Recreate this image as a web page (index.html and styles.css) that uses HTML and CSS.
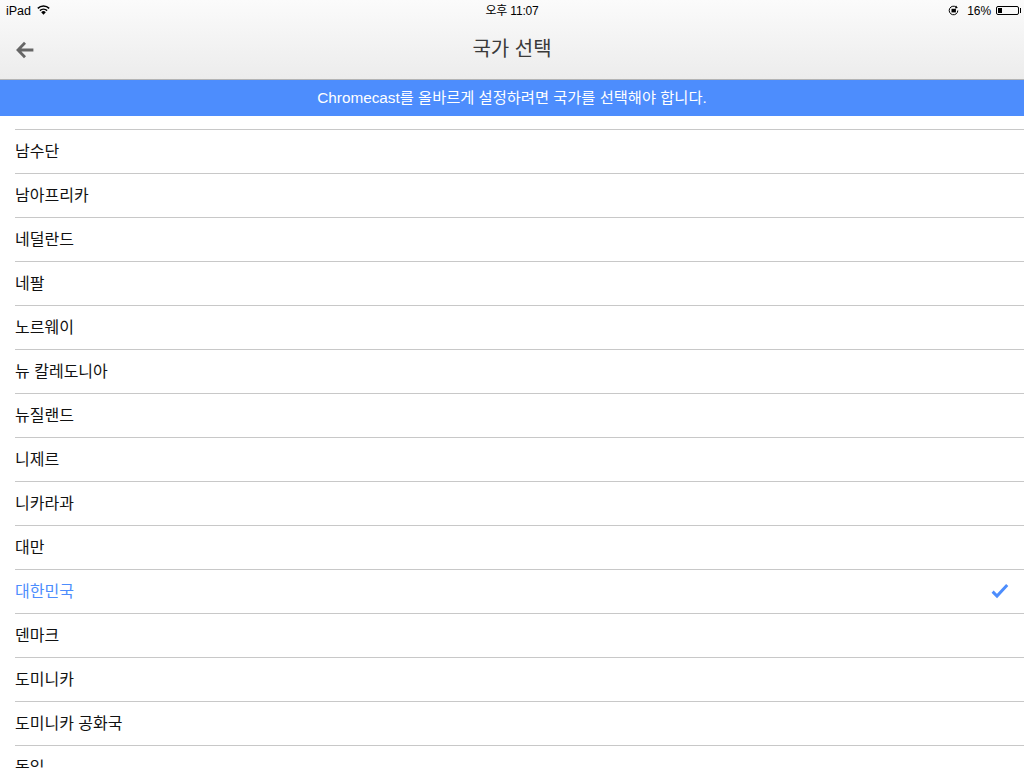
FILE: index.html
```html
<!DOCTYPE html>
<html lang="ko">
<head>
<meta charset="utf-8">
<title>국가 선택</title>
<link rel="stylesheet" href="styles.css">
</head>
<body>
<div class="screen">
  <header class="top">
    <div class="status">
      <div class="status-side">
        <span class="device">iPad</span>
        <svg class="wifi" width="13" height="10" viewBox="0 0 13 10"><path d="M6.5 9.8 4.2 7.2a3.2 3.2 0 0 1 4.6 0z" fill="#000"/><path d="M2.9 5.6A5.2 5.2 0 0 1 10.1 5.6M.8 3.4A8.2 8.2 0 0 1 12.2 3.4" fill="none" stroke="#000" stroke-width="1.5"/></svg>
      </div>
      <div class="status-time">오후 11:07</div>
      <div class="status-side status-right">
        <svg class="lock" width="11" height="11" viewBox="0 0 11 11"><path d="M9.8 5.5A4.3 4.3 0 1 1 8.4 2.3" fill="none" stroke="#000" stroke-width="1"/><path d="M8 .5 9.8 3 7 3.4z" fill="#000"/><rect x="3.5" y="3.8" width="4.4" height="3.6" fill="#000"/></svg>
        <span class="pct">16%</span>
        <div class="battery"><div class="battery-level"></div></div>
      </div>
    </div>
    <div class="nav">
      <svg class="back" width="18" height="18" viewBox="0 0 18 18"><path d="M9 1.8 2 9l7 7.2M2.4 9H17.4" fill="none" stroke="#666" stroke-width="2.8"/></svg>
      <h1 class="title">국가 선택</h1>
    </div>
  </header>
  <div class="notice">Chromecast를 올바르게 설정하려면 국가를 선택해야 합니다.</div>
  <ul class="list">
    <li class="row">남수단</li>
    <li class="row">남아프리카</li>
    <li class="row">네덜란드</li>
    <li class="row">네팔</li>
    <li class="row">노르웨이</li>
    <li class="row">뉴 칼레도니아</li>
    <li class="row">뉴질랜드</li>
    <li class="row">니제르</li>
    <li class="row">니카라과</li>
    <li class="row">대만</li>
    <li class="row selected">대한민국
      <svg class="check" width="18" height="16" viewBox="0 0 18 16"><path d="M1.6 8.6 6 13 16.2 2" fill="none" stroke="#4d8dfd" stroke-width="3"/></svg>
    </li>
    <li class="row">덴마크</li>
    <li class="row">도미니카</li>
    <li class="row">도미니카 공화국</li>
    <li class="row">독일</li>
  </ul>
</div>
</body>
</html>
```
FILE: styles.css
```css
* { box-sizing: border-box; }
html, body { margin: 0; padding: 0; background: #fff; }
.screen {
  width: 1024px;
  height: 768px;
  overflow: hidden;
  font-family: "Noto Sans CJK KR", "Liberation Sans", sans-serif;
  color: #000;
}
.top {
  height: 80px;
  background: linear-gradient(#fbfbfb, #ececec);
  border-bottom: 1px solid #b4b4b4;
}
.status {
  height: 20px;
  padding: 0 6px;
  display: grid;
  grid-template-columns: 1fr auto 1fr;
  align-items: center;
  font-family: "Liberation Sans", "Noto Sans CJK KR", sans-serif;
  font-size: 12px;
}
.status-side { display: flex; align-items: center; gap: 6px; }
.status-right { justify-content: flex-end; gap: 8px; margin-right: -1px; }
.device { font-size: 12.5px; margin-top: 1px; }
.wifi { margin-top: -1px; }
.status-time { font-size: 12px; letter-spacing: -0.2px; margin-bottom: 2px; }
.pct { font-size: 12px; margin-top: 1px; letter-spacing: -0.1px; }
.battery {
  width: 23px;
  height: 9px;
  border: 1px solid #000;
  border-radius: 2px;
  padding: 1px;
  margin-left: -3px;
  position: relative;
}
.battery::after {
  content: "";
  position: absolute;
  right: -3px;
  top: 1px;
  width: 1px;
  height: 5px;
  background: #000;
}
.battery-level { width: 4px; height: 5px; background: #000; }
.nav {
  height: 59px;
  padding: 0 16px;
  display: grid;
  grid-template-columns: 1fr auto 1fr;
  align-items: center;
}
.back { display: block; }
.title {
  margin: 0 0 4px;
  font-size: 20px;
  font-weight: 400;
  color: #3a3a3a;
  line-height: 55px;
}
.notice {
  height: 36px;
  background: #4d8dfd;
  color: #fff;
  font-size: 15.3px;
  line-height: 36px;
  text-align: center;
  font-family: "Liberation Sans", "Noto Sans CJK KR", sans-serif;
}
.list {
  list-style: none;
  margin: 0;
  padding: 13px 0 0 15px;
}
.row {
  height: 44px;
  border-top: 1px solid #c8c8c8;
  display: flex;
  align-items: center;
  justify-content: space-between;
  padding: 0 15px 4px 0;
  font-size: 16px;
  color: #111;
}
.selected { color: #4d8dfd; }
.check { display: block; margin-top: 3px; }
```
